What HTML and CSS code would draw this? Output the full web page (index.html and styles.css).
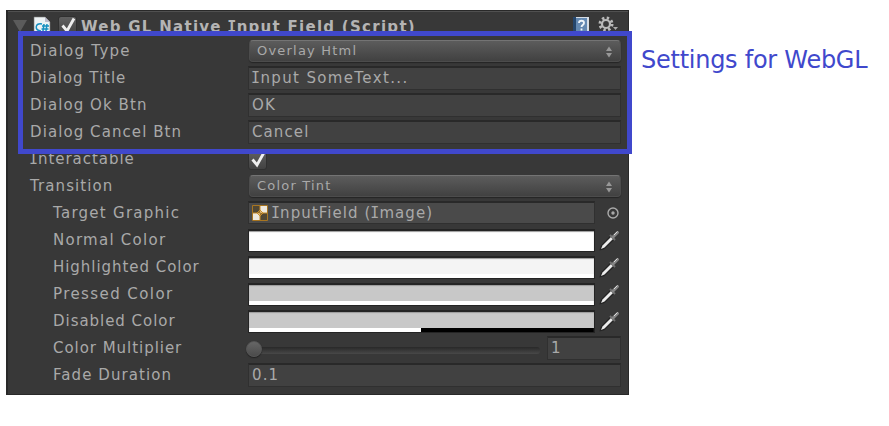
FILE: index.html
```
<!DOCTYPE html>
<html lang="en">
<head>
<meta charset="utf-8">
<title>Web GL Native Input Field</title>
<link rel="stylesheet" href="styles.css">
</head>
<body>
<svg width="0" height="0" class="defs">
  <symbol id="dropper" viewBox="0 0 22 22">
    <path d="M1.500 20.500 2.500 17 12 7 15 10 5 19.500Z" fill="#222" stroke="#252525" stroke-width="1.5"/>
    <path d="M2 20 3.500 16.500 12 8 14 10 5.500 18.500Z" fill="#ededed"/>
    <path d="M11 6 16 11" stroke="#707070" stroke-width="2"/>
    <path d="M14 8 18.500 3.500" stroke="#858585" stroke-width="3" stroke-linecap="round"/>
    <path d="M15 6 18.500 2.500" stroke="#ddd" stroke-width="1"/>
  </symbol>
  <symbol id="check" viewBox="0 0 20 20">
    <path d="M4.500 9.500 9 15 16 2.500" fill="none" stroke="#eee" stroke-width="2.800"/>
  </symbol>
  <symbol id="updown" viewBox="0 0 8 12">
    <path d="M1 5 4 .5 7 5ZM1 7 4 11.500 7 7Z" fill="#989898"/>
  </symbol>
</svg>
<main class="stage">
  <section class="panel">
    <header class="head">
      <svg class="fold" width="14" height="12"><path d="M0 0H14L7 12Z" fill="#5b5b5b"/></svg>
      <svg class="script" width="18" height="20"><path d="M1 1H12L17 6V19H1Z" fill="#edf2f4" stroke="#777" stroke-width=".6"/><path d="M12 1V6H17" fill="#bbc" /><path d="M9 8C2 6 1 15 8 15M11 8 10 15M14 8 13 15M9 10H16M8.500 13H15.500" fill="none" stroke="#168fc0" stroke-width="1.500"/></svg>
      <span class="box"><svg width="20" height="20"><use href="#check"/></svg></span>
      <h1>Web GL Native <i>I</i>nput Field (Script)</h1>
      <svg class="book" width="18" height="20"><path d="M1 1H17V19H1Z" fill="#d6dde5"/><path d="M1 1H4V17H1Z" fill="#26476d"/><path d="M4 2H15V17H4Z" fill="#6489b2"/><path d="M7 7C7 4 12 4 12 7 12 9 9.500 9 9.500 11M9.500 12.500V14.500" fill="none" stroke="#eef5fa" stroke-width="1.800"/></svg>
      <svg class="gear" width="22" height="18"><circle cx="8" cy="8" r="6" fill="none" stroke="#b9b9b9" stroke-width="3" stroke-dasharray="2.350 2.362"/><circle cx="8" cy="8" r="4" fill="none" stroke="#b9b9b9" stroke-width="2.200"/><path d="M15 11H20L17.500 14Z" fill="#aaa"/></svg>
    </header>
    <div class="row"><label class="wider">Dialog Type</label><div class="select overlay">Overlay Html<svg width="8" height="12"><use href="#updown"/></svg></div></div>
    <div class="row"><label class="snug">Dialog Title</label><div class="field sentence"><i>I</i>nput SomeText...</div></div>
    <div class="row"><label>Dialog Ok Btn</label><div class="field">OK</div></div>
    <div class="row"><label>Dialog Cancel Btn</label><div class="field">Cancel</div></div>
    <div class="row"><label class="snug"><i>I</i>nteractable</label><span class="box"><svg width="20" height="20"><use href="#check"/></svg></span></div>
    <div class="row"><label>Transition</label><div class="select">Color Tint<svg width="8" height="12"><use href="#updown"/></svg></div></div>
    <div class="row sub"><label class="wider">Target Graphic</label><div class="field object"><svg width="16" height="16"><path d="M.5.5H15.500V15.500H.5Z" fill="#504735" stroke="#a87520"/><path d="M8 1H15V8H8ZM1 8H8V15H1Z" fill="#eee9df"/><path d="M8 1V15M1 8H15M5 8 8 5 11 8 8 11Z" fill="none" stroke="#c78c2a"/></svg><span><i>I</i>nputField (<i>I</i>mage)</span></div><svg class="pick" width="12" height="12"><circle cx="6" cy="6" r="5" fill="none" stroke="#aaa" stroke-width="1.400"/><circle cx="6" cy="6" r="1.700" fill="#aaa"/></svg></div>
    <div class="row sub"><label class="wider">Normal Color</label><div class="color"></div><svg class="dropper" width="22" height="22"><use href="#dropper"/></svg></div>
    <div class="row sub"><label class="snug">Highlighted Color</label><div class="color high"></div><svg class="dropper" width="22" height="22"><use href="#dropper"/></svg></div>
    <div class="row sub"><label class="widest">Pressed Color</label><div class="color pressed"></div><svg class="dropper" width="22" height="22"><use href="#dropper"/></svg></div>
    <div class="row sub"><label class="snug">Disabled Color</label><div class="color disabled"></div><svg class="dropper" width="22" height="22"><use href="#dropper"/></svg></div>
    <div class="row sub"><label class="snug">Color Multiplier</label><div class="slider"><span class="knob"></span></div><div class="field number">1</div></div>
    <div class="row sub"><label>Fade Duration</label><div class="field">0.1</div></div>
  </section>
  <p class="note">Settings for WebGL</p>
  <div class="highlight"></div>
</main>
</body>
</html>
```
FILE: styles.css
```
* { box-sizing: border-box; }
body { margin: 0; background: #fff; font: 15px/22px "DejaVu Sans", sans-serif; }
.defs { position: absolute; }
.stage { position: relative; display: flex; align-items: flex-start; height: 426px; padding: 10px 0 0 6px; }
.panel { width: 623px; height: 385px; background: #383838; color: #a9a9a9; border: solid #292929; border-width: 1px 1px 1px 2px; box-shadow: inset 0 1px #505050; }
i { font-family: "DejaVu Sans Mono", monospace; font-style: normal; margin: 0 -1px; }
.head { display: flex; height: 27px; align-items: center; padding: 3px 8px 0 5px; }
.head h1 { margin: 2px auto 0 4px; font-size: 15px; line-height: 22px; letter-spacing: 1.28px; color: #b4b4b4; white-space: nowrap; }
.fold { margin-right: 6px; }
.script { margin: 0 7px 0 0; }
.book { margin: 0 8px 0 0; }
.gear { margin-top: -2px; }
.row { display: flex; height: 27px; align-items: center; padding: 0 7px 0 22px; }
.row label { width: 218px; flex: none; margin-top: -1px; letter-spacing: 1.08px; white-space: nowrap; }
.row .snug { letter-spacing: .96px; }
.row .wider { letter-spacing: 1.26px; }
.row .widest { letter-spacing: 1.42px; }
.row.sub { padding-left: 45px; }
.row.sub label { width: 195px; }
.field { flex: 1; height: 24px; margin-top: -2px; padding: 0 0 1px 3px; line-height: 20px; letter-spacing: 1.1px; background: #414141; border: 1px solid #303030; border-top: 2px solid #292929; }
.sentence { letter-spacing: 1.36px; }
.object { flex: none; width: 347px; height: 23px; display: flex; align-items: center; gap: 4px; letter-spacing: 1.05px; background: #4a4a4a; }
.pick { margin: -2px 0 0 12px; }
.select { flex: 1; display: flex; justify-content: space-between; align-items: center; height: 22px; margin: -1px 0 0 1px; padding: 0 7px 1px 7px; font-size: 13px; letter-spacing: 1.2px; border-radius: 4px; background: linear-gradient(#5c5c5c, #414141); border: 1px solid #4c4c4c; border-top-color: #747474; box-shadow: 0 1px 1px #252525; }
.select svg { margin-top: 2px; }
.box { width: 19px; height: 20px; display: block; border-radius: 3px; background: linear-gradient(#606060, #424242); border: 1px solid #303030; }
.box svg { display: block; margin: -1px; }
.color { width: 347px; height: 23px; margin-top: -1px; background: #fff; border: 1px solid #242424; border-top-width: 2px; box-shadow: inset 0 1px 1px #999; }
.high { background: linear-gradient(#f4f4f4 80%, #fff 80%); }
.pressed { background: linear-gradient(#c8c8c8 80%, #fff 80%); }
.disabled { background: linear-gradient(#c8c8c8 0 0) top / 100% 16px no-repeat, linear-gradient(90deg, #fff 50%, #000 50%); }
.dropper { margin: -1px 0 0 4px; }
.slider { position: relative; width: 292px; height: 7px; margin-right: 7px; margin-top: 4px; border-radius: 3px; background: linear-gradient(#292929, #484848); }
.knob { position: absolute; left: -2px; top: -6px; width: 16px; height: 16px; border-radius: 50%; background: linear-gradient(#666, #4b4b4b); border: 1px solid #555; box-shadow: 0 1px 1px #222; }
.note { margin: 33px 0 0 12px; font-size: 24px; line-height: 34px; letter-spacing: -.26px; white-space: nowrap; color: #4048cc; }
.highlight { position: absolute; left: 18px; top: 31px; width: 614px; height: 123px; border: 5px solid #4048cc; }
```
